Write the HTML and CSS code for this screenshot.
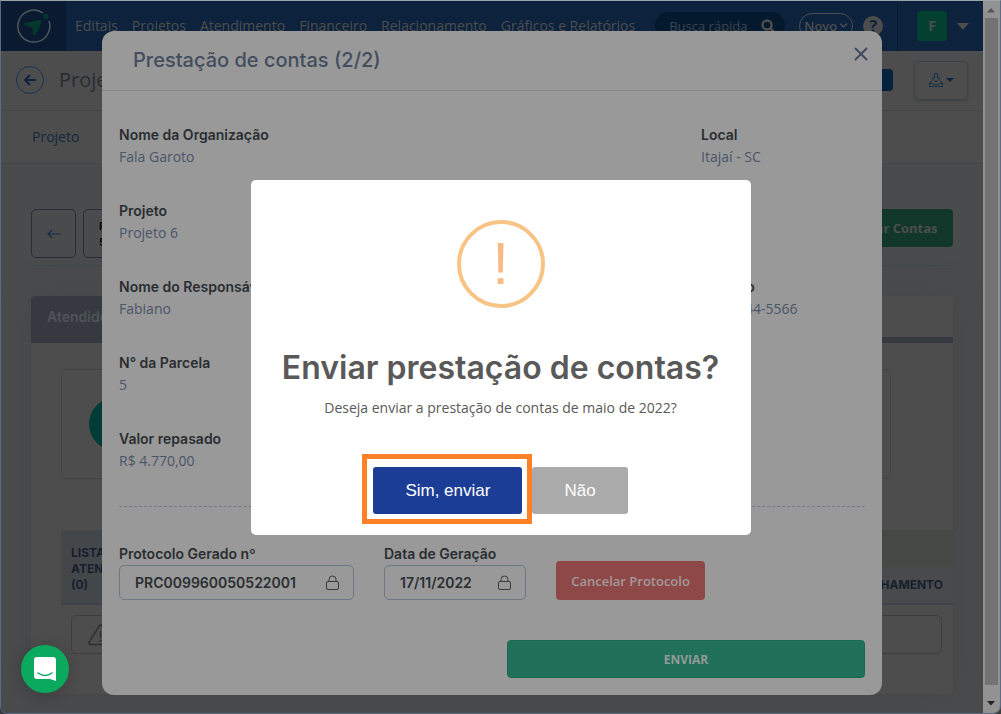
FILE: index.html
```html
<!DOCTYPE html>
<html lang="pt-br">
<head>
    <meta charset="UTF-8">
    <meta name="viewport" content="width=device-width, initial-scale=1.0">
    <title>Prestação de contas</title>
    <link rel="stylesheet" href="styles.css">
</head>
<body>
    <div class="window">
        <div class="page">
            <header class="topbar">
                <a href="#" class="logo" aria-label="Início">
                    <svg width="36" height="36" viewBox="0 0 36 36">
                        <path d="M27 5A16 16 0 1 0 33 13" fill="none" stroke="#4e565e" stroke-width="1.500"/>
                        <path d="M8 15.500Q10 14.500 16 13.500L25.500 11.500Q24 20 19.500 26.500Q17 28 16.500 26Q17.500 21 16 19.500Q14 18 10.500 18Q8.500 17.500 8 15.500Z" fill="#05382a"/>
                        <circle cx="30" cy="8.500" r="2.500" fill="#05382a"/>
                    </svg>
                </a>
                <nav class="menu">
                    <a href="#">Editais</a>
                    <a href="#">Projetos</a>
                    <a href="#">Atendimento</a>
                    <a href="#">Financeiro</a>
                    <a href="#">Relacionamento</a>
                    <a href="#">Gráficos e Relatórios</a>
                </nav>
                <div class="search">
                    <input type="text" class="search-input" placeholder="Busca rápida" aria-label="Busca rápida">
                    <svg width="14" height="14" viewBox="0 0 14 14" fill="none" stroke="#4d4d4d" stroke-width="2.500"><circle cx="6" cy="6" r="4.500"/><path d="M9 9l4 4"/></svg>
                </div>
                <button class="btn-new">Novo<svg width="9" height="9" viewBox="0 0 9 9" fill="none" stroke="#4d4d4d" stroke-width="1.500"><path d="M1 1.500l3.500 3.500 3.500-3.500"/></svg></button>
                <button class="btn-help">?</button>
                <div class="user">
                    <span class="avatar">F</span>
                    <svg width="12" height="7" viewBox="0 0 12 7"><path d="M0 0h12L6 7z" fill="#4d4d4d"/></svg>
                </div>
            </header>

            <div class="page-header">
                <button class="btn-back" aria-label="Voltar">
                    <svg width="14" height="12" viewBox="0 0 14 12" fill="none" stroke="#0d2440" stroke-width="2"><path d="M13 6H2M7 1L2 6l5 5"/></svg>
                </button>
                <h1 class="page-title">Projeto 6</h1>
                <span class="badge"></span>
                <button class="btn-download" aria-label="Baixar">
                    <svg width="14" height="14" viewBox="0 0 14 14" fill="none" stroke="#183048"><path d="M5.500.500h3v4.500h2.500L7 9 3 5h2.500zM3 8H2.500L.500 10.500v3h13v-3L11.500 8H11M.500 10.500h3.500l1 1h4l1-1h3.500"/></svg>
                    <svg width="8" height="5" viewBox="0 0 8 5"><path d="M0 0h8L4 4z" fill="#0d2440"/></svg>
                </button>
            </div>

            <div class="tabs"><a href="#">Projeto</a></div>

            <main class="content">
                <div class="toolbar">
                    <button class="btn-outline" aria-label="Anterior">
                        <svg width="14" height="10" viewBox="0 0 14 10" fill="none" stroke="#142b48" stroke-width="1.200"><path d="M14 5H1M5 1L1 5l4 4"/></svg>
                    </button>
                    <button class="btn-outline btn-period">P.<br>5</button>
                    <button class="btn-accounts">Enviar Contas</button>
                </div>

                <section class="panel">
                    <div class="panel-tabs"><h2 class="panel-title">Atendidos</h2></div>
                    <div class="panel-body">
                        <div class="card"><span class="card-icon"></span></div>
                        <table class="list">
                            <thead>
                                <tr>
                                    <th rowspan="2" class="col-list">LISTA DE<br>ATENDIDOS<br>(0)</th>
                                    <th class="col-group"></th>
                                </tr>
                                <tr>
                                    <th class="col-detail">DETALHAMENTO</th>
                                </tr>
                            </thead>
                        </table>
                        <div class="empty">
                            <svg width="26" height="22" viewBox="0 0 26 22" fill="none" stroke="#2d3036" stroke-width="1.500"><path d="M11.500 1.500L1 18.500q-.500 2 1.500 2h20q2 0 1.500-2L13.500 1.500q-1-1.500-2 0zM12.500 7v7M12.500 16v2"/></svg>
                        </div>
                    </div>
                </section>
            </main>
        </div>

        <div class="scrollbar">
            <svg width="9" height="5" viewBox="0 0 9 5"><path d="M0 4.500h8L4 0z" fill="#555"/></svg>
            <span class="thumb"></span>
            <svg width="9" height="5" viewBox="0 0 9 5"><path d="M0 0h8L4 4.500z" fill="#222"/></svg>
        </div>
    </div>

    <!-- Modal -->
    <div class="modal-wrap">
        <div class="modal">
            <div class="modal-header">
                <h2 class="modal-title">Prestação de contas (2/2)</h2>
                <button class="btn-close" aria-label="Fechar">
                    <svg width="14" height="14" viewBox="0 0 14 14" stroke="#3d4859" stroke-width="1.800"><path d="M1 1l12 12M13 1L1 13"/></svg>
                </button>
            </div>
            <div class="modal-body">
                <dl class="fields">
                    <div><dt>Nome da Organização</dt><dd>Fala Garoto</dd></div>
                    <div><dt>Local</dt><dd>Itajaí - SC</dd></div>
                    <div class="full"><dt>Projeto</dt><dd>Projeto 6</dd></div>
                    <div><dt>Nome do Responsável</dt><dd>Fabiano</dd></div>
                    <div><dt>Contato</dt><dd>(47) 3344-5566</dd></div>
                    <div class="full"><dt>N° da Parcela</dt><dd>5</dd></div>
                    <div class="full"><dt>Valor repasado</dt><dd>R$ 4.770,00</dd></div>
                </dl>

                <form class="protocol">
                    <div class="field field-number">
                        <label for="protocolo">Protocolo Gerado nº</label>
                        <div class="locked">
                            <input type="text" id="protocolo" value="PRC009960050522001" readonly>
                            <svg width="13" height="15" viewBox="0 0 13 15" fill="none" stroke="#3a3a3a"><rect x=".5" y="6.500" width="12" height="8" rx="1.500"/><path d="M3 6.500V4.500a3.500 3.500 0 0 1 7 0v2"/></svg>
                        </div>
                    </div>
                    <div class="field field-date">
                        <label for="data">Data de Geração</label>
                        <div class="locked">
                            <input type="text" id="data" value="17/11/2022" readonly>
                            <svg width="13" height="15" viewBox="0 0 13 15" fill="none" stroke="#3a3a3a"><rect x=".5" y="6.500" width="12" height="8" rx="1.500"/><path d="M3 6.500V4.500a3.500 3.500 0 0 1 7 0v2"/></svg>
                        </div>
                    </div>
                    <button type="button" class="btn-cancel">Cancelar Protocolo</button>
                </form>

                <button class="btn-send">ENVIAR</button>
            </div>
        </div>
    </div>

    <!-- Confirmação -->
    <div class="alert-wrap">
        <div class="alert" role="alertdialog">
            <div class="alert-icon">!</div>
            <h2 class="alert-title">Enviar prestação de contas?</h2>
            <p class="alert-text">Deseja enviar a prestação de contas de maio de 2022?</p>
            <div class="alert-actions">
                <span class="highlight"><button class="btn-alert btn-confirm">Sim, enviar</button></span>
                <button class="btn-alert">Não</button>
            </div>
        </div>
    </div>

    <button class="chat" aria-label="Chat">
        <svg width="24" height="26" viewBox="0 0 24 26"><path d="M4 1h16q3 0 3 3v21l-6-2H4q-3 0-3-3V4q0-3 3-3z" fill="#fff"/><path d="M5 17q7 5 14 0" fill="none" stroke="#0aa95e" stroke-width="1.500" stroke-linecap="round"/></svg>
    </button>
</body>
</html>
```
FILE: styles.css
```css
* {
    box-sizing: border-box;
}

body {
    margin: 0;
    background-color: #3a3c40;
    font-family: "Open Sans", sans-serif;
    font-size: 14px;
    line-height: 22px;
    color: #2a2d30;
}

h1, h2, p, dl, dd {
    margin: 0;
}

a {
    text-decoration: none;
}

button {
    padding: 0;
    border: none;
    background: none;
    font-family: inherit;
    cursor: pointer;
}

svg {
    flex-shrink: 0;
}

.window {
    display: flex;
    height: 100vh;
    overflow: hidden;
    border: 1px solid #5b6b82;
    border-top-color: #9aa3a8;
    border-radius: 0 0 8px 8px;
}

.page {
    flex: 1;
    min-width: 0;
    background-color: #4a4b4c;
}

/* Barra superior */
.topbar {
    display: flex;
    align-items: center;
    height: 50px;
    background-color: #0d223d;
    color: #4d4d4d;
}

.logo {
    display: flex;
    align-items: center;
    justify-content: center;
    width: 65px;
    height: 100%;
    background-color: #0a1b31;
}

.menu {
    display: flex;
    gap: 14px;
    margin: 0 20px 0 9px;
    white-space: nowrap;
}

.menu a {
    color: #4d4d4d;
}

.search {
    display: flex;
    align-items: center;
    width: 130px;
    height: 28px;
    padding: 0 10px 0 14px;
    border-radius: 14px;
    background-color: #04192e;
}

.search-input {
    flex: 1;
    min-width: 0;
    padding: 0;
    border: none;
    background: none;
    font: 13px "Open Sans", sans-serif;
}

.search-input::placeholder {
    color: #3c4650;
}

.btn-new {
    display: flex;
    align-items: center;
    justify-content: center;
    gap: 2px;
    width: 54px;
    height: 26px;
    margin-left: 14px;
    border: 1px solid #4d4d4d;
    border-radius: 13px;
    font-size: 13px;
    font-weight: 600;
    color: #4d4d4d;
}

.btn-help {
    width: 20px;
    height: 20px;
    margin-left: 10px;
    border-radius: 50%;
    background-color: #4d4d4d;
    font-size: 16px;
    font-weight: 700;
    line-height: 20px;
    color: #0d223d;
}

.user {
    display: flex;
    align-items: center;
    gap: 10px;
    height: 100%;
    margin-left: auto;
    padding: 0 14px 0 19px;
    border-left: 1px solid #081a30;
}

.avatar {
    width: 30px;
    height: 30px;
    border-radius: 3px;
    background-color: #03402f;
    font-weight: 700;
    line-height: 30px;
    text-align: center;
}

/* Cabeçalho da página */
.page-header {
    display: flex;
    align-items: center;
    height: 60px;
    padding: 0 15px 1px;
    border-bottom: 1px solid #434847;
    background-color: #4d4d4d;
}

.btn-back {
    display: flex;
    align-items: center;
    justify-content: center;
    width: 28px;
    height: 28px;
    border: 1px solid #183250;
    border-radius: 50%;
}

.page-title {
    flex: 1;
    margin-left: 15px;
    font-size: 20px;
    font-weight: 400;
    color: #272c32;
}

.badge {
    width: 90px;
    height: 22px;
    border-radius: 4px;
    background-color: #04213d;
}

.btn-download {
    display: flex;
    align-items: center;
    justify-content: center;
    gap: 3px;
    width: 54px;
    height: 39px;
    margin-left: 21px;
    border: 1px solid #3b4249;
    border-radius: 4px;
    box-shadow: 0 1px 2px #3d4043;
}

.tabs {
    height: 53px;
    padding: 15px 31px;
    border-bottom: 1px solid #434847;
    background-color: #4d4d4d;
}

.tabs a {
    color: #14293f;
}

.content {
    padding: 45px 30px 19px;
}

.toolbar {
    display: flex;
    align-items: flex-start;
    gap: 7px;
    height: 57px;
    border-bottom: 1px solid #414948;
}

.btn-outline {
    width: 45px;
    height: 49px;
    border: 1px solid #292e36;
    border-radius: 5px;
}

.btn-period {
    width: 90px;
    padding-left: 15px;
    font-family: Inter, sans-serif;
    font-size: 11px;
    font-weight: 600;
    line-height: 16px;
    text-align: left;
}

.btn-accounts {
    width: 120px;
    height: 38px;
    margin-left: auto;
    border-radius: 4px;
    background-color: #11372b;
    font-size: 13px;
    font-weight: 700;
    color: #4d4d4d;
}

.panel {
    margin-top: 30px;
    border-radius: 4px;
    background-color: #4d4d4d;
    box-shadow: 0 0 30px #464748;
}

.panel-tabs {
    border-bottom: 6px solid #363940;
}

.panel-title {
    width: 150px;
    height: 41px;
    padding-left: 16px;
    border-radius: 4px 4px 0 0;
    background-color: #363940;
    font: 600 14px/42px Inter, sans-serif;
    color: #50545a;
}

.panel-body {
    padding: 26px 0 40px 30px;
}

.card {
    display: flex;
    align-items: center;
    height: 110px;
    margin-right: 62px;
    padding-left: 27px;
    border: 1px solid #414545;
    border-radius: 5px;
}

.card-icon {
    width: 54px;
    height: 54px;
    border-radius: 50%;
    background-color: #003c36;
}

.list {
    width: 100%;
    margin-top: 51px;
    border-collapse: collapse;
    font: 700 12px/16px Inter, sans-serif;
    color: #171f2e;
}

.list th {
    height: 37px;
    padding: 0 10px;
}

.list .col-list {
    width: 130px;
    padding-top: 4px;
    border-bottom: 2px solid #3f4247;
    background-color: #44474a;
    text-align: left;
}

.list .col-group {
    background-color: #454845;
}

.list .col-detail {
    border-bottom: 2px solid #3f4247;
    background-color: #484a4c;
    text-align: right;
}

.empty {
    display: flex;
    align-items: center;
    height: 39px;
    margin: 10px 11px 0 10px;
    padding-left: 16px;
    border: 1px solid #3c3e40;
    border-radius: 5px;
}

.scrollbar {
    display: flex;
    flex-direction: column;
    align-items: center;
    width: 17px;
    padding: 7px 2px;
    background-color: #929292;
}

.thumb {
    flex: 1;
    width: 13px;
    margin: 5px 0 16px;
    background-color: #737373;
}

/* Modal */
.modal-wrap {
    position: fixed;
    inset: 31px 17px 0 0;
    display: flex;
    align-items: flex-start;
    justify-content: center;
}

.modal {
    width: 780px;
    max-width: 95%;
    border-radius: 12px;
    background-color: #999;
}

.modal-header {
    display: flex;
    align-items: flex-start;
    justify-content: space-between;
    height: 60px;
    padding: 16px 14px 0 31px;
    border-bottom: 1px solid #888a8b;
}

.modal-title {
    font: 500 20px/26px Inter, sans-serif;
    color: #434d5e;
}

.btn-close {
    display: flex;
}

.modal-body {
    padding: 33px 17px 17px;
}

.fields {
    display: grid;
    grid-template-columns: 1fr 164px;
    row-gap: 32px;
    padding-bottom: 34px;
    border-bottom: 1px dashed #757c86;
}

.full {
    grid-column: 1 / -1;
}

.fields dt, .field label {
    font: 600 14px/22px Inter, sans-serif;
    color: #2a2e31;
}

.fields dd {
    color: #4a5568;
}

.protocol {
    display: flex;
    align-items: flex-end;
    gap: 30px;
    margin-top: 36px;
}

.field label {
    display: block;
}

.field-number {
    width: 235px;
}

.field-date {
    width: 142px;
}

.locked {
    display: flex;
    align-items: center;
    height: 35px;
    padding: 0 14px 0 15px;
    border: 1px solid #6e7785;
    border-radius: 5px;
}

.locked input {
    flex: 1;
    min-width: 0;
    padding: 0;
    border: none;
    background: none;
    font: 600 14px Inter, sans-serif;
    color: #2a2e31;
}

.btn-cancel {
    width: 149px;
    height: 39px;
    border-radius: 4px;
    background-color: #8e4848;
    font-size: 13px;
    font-weight: 600;
    color: #a29a9a;
}

.btn-send {
    display: block;
    width: 48%;
    height: 38px;
    margin: 40px 0 0 auto;
    border: 1px solid #1c6850;
    border-radius: 4px;
    background-color: #21705a;
    font-size: 12px;
    font-weight: 700;
    color: #939b97;
}

/* Alerta de confirmação */
.alert-wrap {
    position: fixed;
    inset: 1px 0 0;
    display: flex;
    align-items: center;
    justify-content: center;
}

.alert {
    width: 500px;
    max-width: 95%;
    padding: 40px 17px 21px;
    border-radius: 5px;
    background-color: #fff;
    text-align: center;
}

.alert-icon {
    width: 88px;
    height: 88px;
    margin: 0 auto;
    border: 4px solid #f8c486;
    border-radius: 50%;
    font: 60px/80px "Liberation Sans", Arial, sans-serif;
    color: #f8bb86;
}

.alert-title {
    margin-top: 40px;
    font: 600 32px/40px Inter, sans-serif;
    color: #595959;
}

.alert-text {
    margin-top: 9px;
    color: #595959;
}

.alert-actions {
    display: flex;
    justify-content: center;
    gap: 10px;
    margin-top: 48px;
}

.highlight {
    position: relative;
}

.highlight::after {
    content: "";
    position: absolute;
    inset: -13px -10px -10px -11px;
    border: 5px solid #ff8127;
    pointer-events: none;
}

.btn-alert {
    height: 47px;
    padding: 0 32px;
    border-radius: 3px;
    background-color: #aaa;
    font: 17px "Liberation Sans", Arial, sans-serif;
    color: #fff;
}

.btn-confirm {
    background-color: #1c3d95;
}

/* Botão de chat */
.chat {
    position: fixed;
    bottom: 21px;
    left: 21px;
    display: flex;
    align-items: center;
    justify-content: center;
    width: 48px;
    height: 48px;
    border-radius: 50%;
    background-color: #0aa95e;
    box-shadow: 0 2px 16px rgba(0, 0, 0, 0.2);
}
```
